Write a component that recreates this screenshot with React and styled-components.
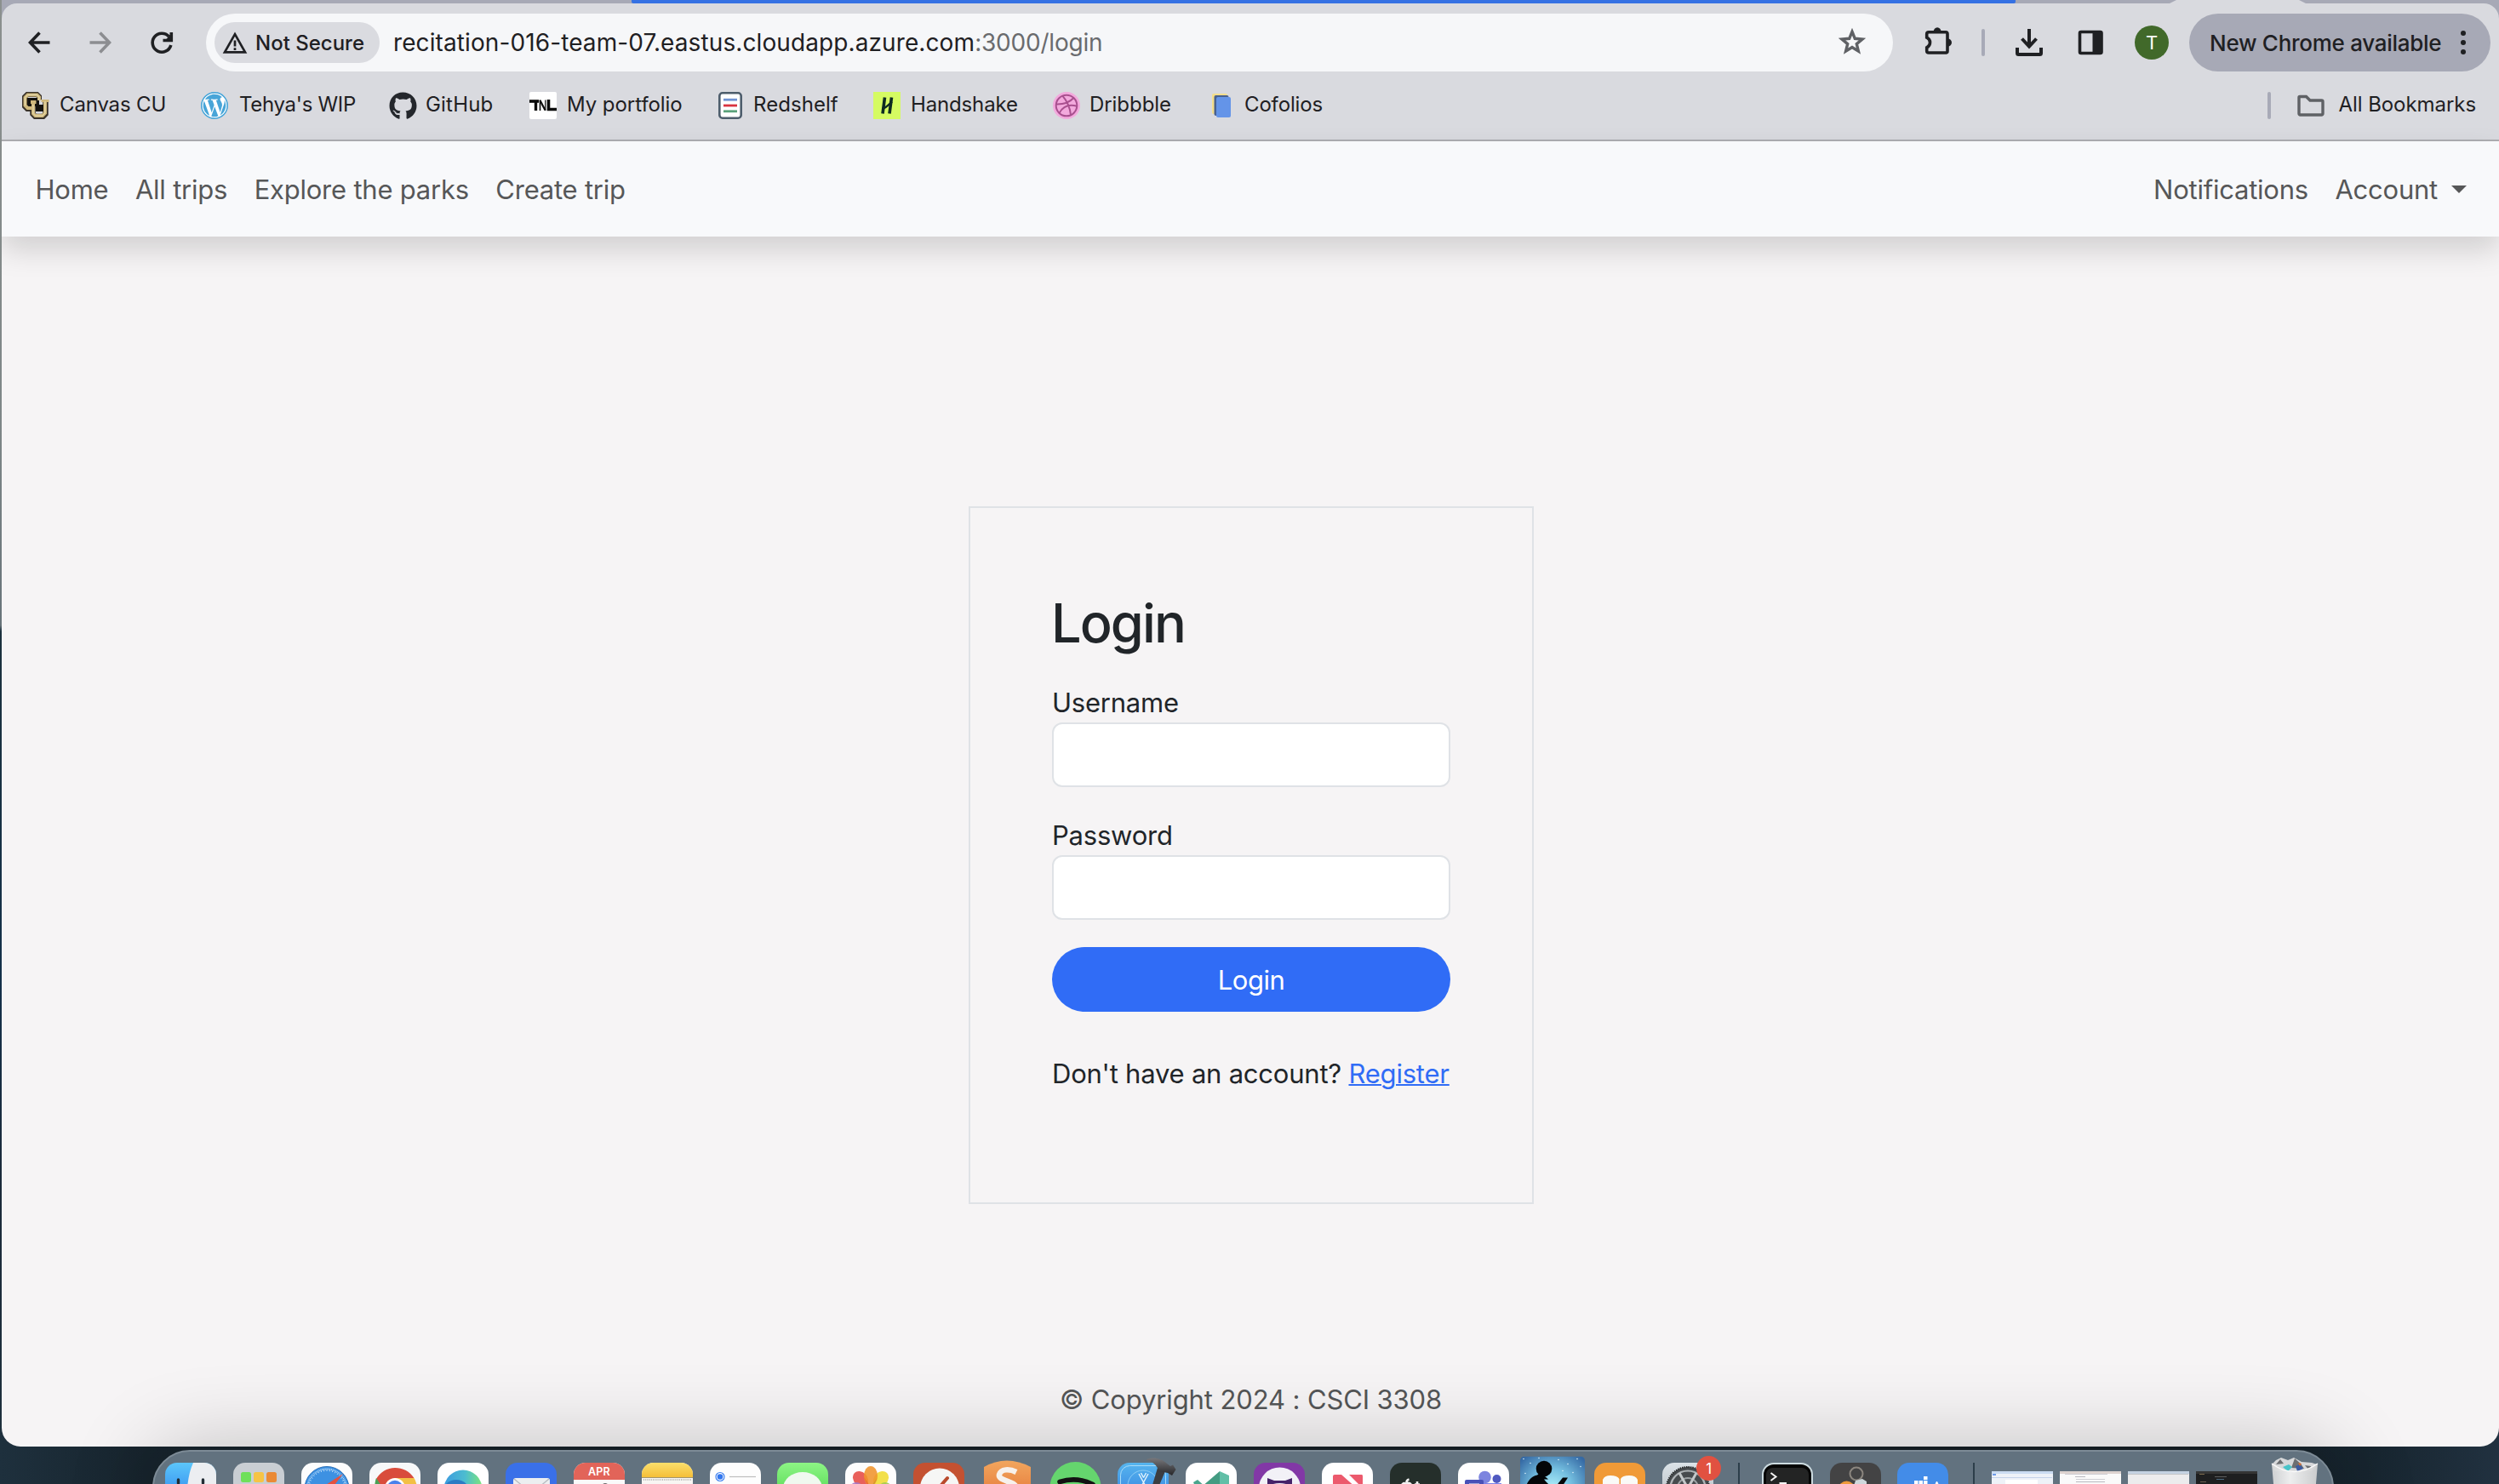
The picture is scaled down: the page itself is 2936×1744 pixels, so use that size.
import React from 'react';
import styled, { createGlobalStyle, css } from 'styled-components';
import { FaGithub, FaWordpress } from 'react-icons/fa';

const GlobalStyle = createGlobalStyle`
  * { box-sizing: border-box; }
  body { margin: 0; background: #1a2833; font-family: Inter, 'Liberation Sans', sans-serif; }
`;

const Desktop = styled.div`
  width: 2936px;
  height: 1744px;
  overflow: hidden;
  display: flex;
  flex-direction: column;
  gap: 4px;
  padding-left: 2px;
  background:
    linear-gradient(#8b908e 0, #7e8687 500px, #68747a 735px, #1b303d 742px, #14304a 1150px, #1b2a3a 1400px, transparent 1680px) 0 0 / 2px 100% no-repeat,
    linear-gradient(90deg, #1e303d 0, #17242d 170px, #151f26 900px, #151f26 2600px, #17252f 2780px, #213140 2936px);
`;

const BrowserWindow = styled.div`
  flex: none;
  height: 1700px;
  display: flex;
  flex-direction: column;
  overflow: hidden;
  border-radius: 0 0 22px 22px;
  background: #f6f4f5;
`;

/* ---------- browser chrome ---------- */

const TabStrip = styled.div`
  height: 4px;
  display: flex;
  background: #a7a9b6;
`;
const TabEdge = styled.div`
  width: ${(p) => p.$width}px;
  height: 4px;
  background: ${(p) => p.$color || 'transparent'};
  border-radius: 0 0 ${(p) => p.$round || 0}px ${(p) => p.$round || 0}px;
`;
const ActiveTabFoot = styled.div`
  width: 160px;
  height: 4px;
  background: #d9dadf;
  clip-path: polygon(8px 0, 152px 0, 160px 100%, 0 100%);
`;
const ChromeBackdrop = styled.div`
  background: #a7a9b6;
`;
const ChromeArea = styled.header`
  background: #d9dadf;
  border-bottom: 2px solid #aeaeb2;
  border-radius: 18px 18px 0 0;
  height: 162px;
`;
const Toolbar = styled.div`
  height: 92px;
  display: flex;
  align-items: center;
  padding-left: 25px;
`;
const Glyph = styled.svg`
  flex: none;
  width: ${(p) => p.$size || 40}px;
  height: ${(p) => p.$size || 40}px;
  margin-right: ${(p) => p.$after || 0}px;
  overflow: visible;
  fill: none;
  stroke: ${(p) => p.$color || '#1f2023'};
  stroke-width: ${(p) => p.$weight || 3.6};
`;
const Omnibox = styled.div`
  width: 1982px;
  height: 68px;
  margin-right: 34px;
  padding: 0 28px 0 10px;
  display: flex;
  align-items: center;
  border-radius: 34px;
  background: #f6f7f9;
`;
const SecurityChip = styled.div`
  width: 194px;
  height: 48px;
  padding-left: 8px;
  display: flex;
  align-items: center;
  gap: 8px;
  border-radius: 24px;
  background: #dadbe0;
  color: #1f2023;
  font-size: 24px;
  font-weight: 500;
  white-space: nowrap;
`;
const Address = styled.div`
  flex: 1;
  padding-left: 16px;
  color: #1f2023;
  font-size: 28px;
  letter-spacing: 0.1px;
  white-space: nowrap;
`;
const AddressPath = styled.span`
  color: #6a6b6e;
  letter-spacing: -0.2px;
`;
const Divider = styled.div`
  flex: none;
  width: 4px;
  height: 32px;
  margin-right: ${(p) => p.$after}px;
  border-radius: 2px;
  background: #a8aab7;
`;
const Avatar = styled.div`
  width: 40px;
  height: 40px;
  margin-right: 24px;
  display: grid;
  place-items: center;
  border-radius: 50%;
  background: #41692a;
  color: #fff;
  font-size: 22px;
`;
const UpdateChip = styled.div`
  width: 354px;
  height: 68px;
  padding: 0 29px 0 24px;
  display: flex;
  align-items: center;
  justify-content: space-between;
  border-radius: 34px;
  background: #a7a9b6;
  color: #1f2023;
  font-size: 26px;
  font-weight: 500;
  letter-spacing: -0.28px;
  white-space: nowrap;
`;
const Dots = styled.span`
  display: grid;
  gap: 5px;
  &::before, &::after { content: ''; }
  &::before, &::after, i { width: 6px; height: 6px; border-radius: 50%; background: #1f2023; }
`;
const BookmarkBar = styled.nav`
  height: 56px;
  display: flex;
  align-items: center;
  padding: 0 27px 0 24px;
`;
const Bookmark = styled.div`
  width: ${(p) => p.$width}px;
  display: flex;
  align-items: center;
  gap: ${(p) => p.$gap || 12}px;
  color: #1f2023;
  font-size: 24px;
  letter-spacing: ${(p) => p.$tracking ?? -0.06}px;
  white-space: nowrap;
  svg { flex: none; }
`;
const BookmarkLabel = styled.span`
  line-height: 30px;
  padding-bottom: 2px;
`;
const Spacer = styled.div`
  flex: 1;
`;

/* ---------- site ---------- */

const SiteNav = styled.nav`
  flex: none;
  position: relative;
  height: 112px;
  display: flex;
  align-items: center;
  justify-content: space-between;
  padding: 2px 38px 0 39.5px;
  background: #f8f9fb;
  box-shadow: 0 16px 32px rgba(0, 0, 0, 0.15);
`;
const NavGroup = styled.div`
  display: flex;
  align-items: center;
  gap: 31.5px;
`;
const NavLink = styled.a`
  display: flex;
  align-items: center;
  color: #565758;
  font-size: 31px;
  letter-spacing: -0.23px;
  line-height: 48px;
  white-space: nowrap;
  ${(p) => p.$caret && css`
    &::after {
      content: '';
      margin: -2px 0 0 16px;
      border: 9.5px solid transparent;
      border-top-color: #565758;
      border-bottom: 0;
    }
  `}
`;
const Main = styled.main`
  flex: 1;
  display: flex;
  flex-direction: column;
  align-items: center;
  padding: 317px 0 0 2px;
  color: #212529;
  font-size: 31px;
  letter-spacing: -0.22px;
  line-height: 48px;
`;
const Card = styled.form`
  width: 664px;
  height: 820px;
  padding: 97px 96px 0;
  display: flex;
  flex-direction: column;
  border: 2px solid #dfe2e6;
`;
const Title = styled.h2`
  margin: 0 0 31px -1px;
  font-size: 63px;
  font-weight: 500;
  letter-spacing: -1.9px;
  line-height: 77px;
`;
const Field = styled.label`
  display: flex;
  flex-direction: column;
  margin-bottom: 32px;
`;
const Input = styled.input`
  width: 100%;
  height: 76px;
  margin-top: -1px;
  margin-bottom: 1px;
  border: 2px solid #dfe2e6;
  border-radius: 12px;
  background: #fff;
  outline: none;
`;
const SubmitButton = styled.button`
  height: 76px;
  margin: -1px 0 49px;
  padding-top: 3px;
  border: 0;
  border-radius: 38px;
  background: #306cf6;
  color: #fff;
  font: inherit;
  letter-spacing: -0.5px;
`;
const Prompt = styled.p`
  margin: 0;
  white-space: nowrap;
`;
const RegisterLink = styled.a`
  color: #306cf6;
  text-decoration: underline;
  text-decoration-thickness: 2px;
`;
const Footer = styled.footer`
  margin-top: 206px;
  padding-right: 1px;
  color: #545657;
  letter-spacing: -0.12px;
`;

/* ---------- dock ---------- */

const Dock = styled.div`
  flex: none;
  position: relative;
  width: 2563px;
  height: 120px;
  margin-left: 176.5px;
  padding: 13px 0 0 13.5px;
  display: flex;
  align-items: flex-start;
  border: 2px solid #7d8b96;
  border-radius: 44px 44px 0 0;
  background: #62727f;
  box-shadow: 0 0 100px rgba(0, 0, 0, 0.24);
`;
const DockIcon = styled.svg`
  flex: none;
  width: 60px;
  height: 60px;
  margin-right: 19.95px;
  overflow: visible;
`;
const DockRule = styled.div`
  flex: none;
  width: 2px;
  height: 60px;
  margin-right: ${(p) => p.$after}px;
  margin-left: ${(p) => p.$before}px;
  background: #2c3e4a;
`;
const IconWithBadge = styled.div`
  position: relative;
  display: flex;
`;
const Badge = styled.span`
  position: absolute;
  left: 40.5px;
  top: -8px;
  width: 29px;
  height: 29px;
  display: grid;
  place-items: center;
  border-radius: 50%;
  background: #e15141;
  color: #fff;
  font-size: 17px;
`;
const Thumbnail = styled.div`
  flex: none;
  width: 71.5px;
  height: 50px;
  margin: 10px 8.5px 0 0;
  display: flex;
  flex-direction: column;
  gap: 2px;
  border-top: 3px solid ${(p) => p.$bar};
  background: ${(p) => p.$bg};
`;
const ThumbLine = styled.i`
  height: ${(p) => p.$h || 1}px;
  margin-left: ${(p) => p.$left || 0}px;
  width: ${(p) => p.$width}px;
  background: ${(p) => p.$color};
`;
const CalendarLabel = styled.text`
  fill: #fff;
  font: 600 12.5px Inter, sans-serif;
  letter-spacing: 0.2px;
`;

const Tile = ({ fill, children, stroke }) => (
  <DockIcon viewBox="0 0 60 60">
    <rect width="60" height="60" rx="14" fill={fill} stroke={stroke} />
    {children}
  </DockIcon>
);

const CuIcon = () => (
  <svg width="32" height="32" viewBox="0 0 32 32" fill="none">
    <path d="M20 9V5.500l-2.500-2.500H6L3 6v11l3 3h6" stroke="#3a332a" strokeWidth="6" />
    <path d="M12.500 14v12l3 3h9l3-3V9.500" stroke="#3a332a" strokeWidth="6.500" />
    <path d="M6 7h14v10H6z" fill="#15130f" />
    <path d="M16 15h10v8H16z" fill="#15130f" />
    <path d="M20 10V6l-2.500-2.500H6.500L3.500 6.500V16l3 3H12M16.500 12H10" stroke="#cfb87c" strokeWidth="4" />
    <path d="M13 14v11.500l2.500 2.500h8.500l3-3V11" stroke="#cfb87c" strokeWidth="4" />
    <path d="M22.500 10.500h9" stroke="#cfb87c" strokeWidth="3" />
    <path d="M20 10V6l-2.500-2.500H6.500L3.500 6.500V16M13 15v10.500l2.500 2.500h8.500l3-3V11" stroke="#eadfb4" strokeWidth="1" />
  </svg>
);
const WordPressIcon = () => (
  <svg width="32" height="32" viewBox="0 0 32 32">
    <circle cx="16" cy="16" r="15.500" fill="#fff" />
    <FaWordpress size={32} color="#48a5d8" />
    <circle cx="16" cy="16" r="15.300" fill="none" stroke="#48a5d8" strokeWidth="1.400" />
  </svg>
);
const PortfolioIcon = () => (
  <svg width="32" height="32" viewBox="0 0 32 32" fill="none" stroke="#0b0b0b">
    <rect width="32" height="32" rx="2" fill="#fff" stroke="none" />
    <path d="M0 11h11" strokeWidth="3.600" />
    <path d="M7.500 10v12" strokeWidth="3.400" />
    <path d="M12.500 22V9.500" strokeWidth="1.600" />
    <path d="M12.500 10l6 11.500" strokeWidth="2.200" />
    <path d="M18.800 22V9.500" strokeWidth="1.200" />
    <path d="M22.500 9v11.500H32" strokeWidth="3.600" />
  </svg>
);
const RedshelfIcon = () => (
  <svg width="28" height="32" viewBox="0 0 28 32">
    <rect x="1.300" y="1.300" width="25.400" height="29.400" rx="3.500" fill="#fff" stroke="#4d5d6c" strokeWidth="2.600" />
    <path d="M6 9.200h16" stroke="#6f93d2" strokeWidth="2.800" />
    <path d="M6 16h16" stroke="#d9333f" strokeWidth="2.800" />
    <path d="M6 22.800h16" stroke="#5aa27b" strokeWidth="2.800" />
  </svg>
);
const HandshakeIcon = () => (
  <svg width="32" height="32" viewBox="0 0 32 32">
    <rect width="32" height="32" fill="#d5fb62" />
    <path d="M13.500 6.500L11 25.500M21.500 6.500L19 25.500" stroke="#0d2b22" strokeWidth="3.600" fill="none" />
    <path d="M10.500 20c4.500-1.500 7-4.500 11.500-8.500" stroke="#0d2b22" strokeWidth="2.400" fill="none" />
  </svg>
);
const DribbbleIcon = () => (
  <svg width="32" height="32" viewBox="0 0 32 32" fill="none" stroke="#a9508f" strokeWidth="2">
    <circle cx="16" cy="16" r="16" fill="#f3a9dd" stroke="none" />
    <circle cx="16" cy="16" r="12.300" />
    <path d="M11.500 4.800C17 11 20 18 21 27M4 14.500c8 .2 15-1.500 20.500-7.500M7.500 25c4-7.500 11-11 20.800-8.200" />
  </svg>
);
const CofoliosIcon = () => (
  <svg width="32" height="32" viewBox="0 0 32 32">
    <rect x="4" y="2" width="18" height="24" rx="2" fill="#f4de8c" />
    <rect x="6.500" y="4" width="17" height="24" rx="2" fill="#49618f" />
    <rect x="9" y="6" width="17" height="24" rx="2" fill="#6494e8" />
  </svg>
);

const bookmarks = [
  { label: 'Canvas CU', width: 210, tracking: -0.15, icon: <CuIcon /> },
  { label: "Tehya's WIP", width: 221, tracking: -0.3, gap: 13, icon: <WordPressIcon /> },
  { label: 'GitHub', width: 165, tracking: 0.2, gap: 10, icon: <FaGithub size={33} color="#24272c" /> },
  { label: 'My portfolio', width: 222, icon: <PortfolioIcon /> },
  { label: 'Redshelf', width: 182, tracking: 0.05, gap: 13, icon: <RedshelfIcon /> },
  { label: 'Handshake', width: 211, tracking: -0.15, icon: <HandshakeIcon /> },
  { label: 'Dribbble', width: 183, gap: 11, icon: <DribbbleIcon /> },
  { label: 'Cofolios', width: 140, tracking: -0.15, gap: 10, icon: <CofoliosIcon /> },
];

const BrowserChrome = () => (
  <>
    <TabStrip>
      <TabEdge $width={740} />
      <TabEdge $width={1626} $color="#3571e3" $round={2} />
      <TabEdge $width={181} />
      <ActiveTabFoot />
    </TabStrip>
    <ChromeBackdrop>
      <ChromeArea>
        <Toolbar>
          <Glyph viewBox="0 0 40 40" $after={31}>
            <path d="M31.500 20H9M19.500 8.500L8.500 20L19.500 31.500" />
          </Glyph>
          <Glyph viewBox="0 0 40 40" $after={32} $color="#8c8d91">
            <path d="M7.500 20H30M19.500 8.500L30.500 20L19.500 31.500" />
          </Glyph>
          <Glyph viewBox="0 0 40 40" $after={32}>
            <path d="M30.800 23A11 11 0 1 1 28.500 13M31.300 8V17.500H21.500" />
            <path d="M31 10V17.500H24z" fill="#1f2023" stroke="none" />
          </Glyph>
          <Omnibox>
            <SecurityChip>
              <Glyph viewBox="0 0 32 32" $size={32} $weight={2.7}>
                <path d="M16 6.200L28 27.300H4z" />
                <path d="M16 13.500V20.500M16 22.300V25" />
              </Glyph>
              Not Secure
            </SecurityChip>
            <Address>
              recitation-016-team-07.eastus.cloudapp.azure.com<AddressPath>:3000/login</AddressPath>
            </Address>
            <Glyph viewBox="0 0 40 40" $color="#5f6165" $weight={3.4}>
              <path d="M20 7.200L23.300 15.300L32 16L25.300 21.700L27.400 30.200L20 25.600L12.600 30.200L14.700 21.700L8 16L16.700 15.300Z" />
            </Glyph>
          </Omnibox>
          <Glyph viewBox="0 0 40 40" $after={30}>
            <path d="M8 7.700H28a2 2 0 0 1 2 2V30a2 2 0 0 1-2 2H8a2.300 2.300 0 0 1-2.300-2.300V25.800C10.800 23.500 10.800 16.500 5.700 14.200V10A2.300 2.300 0 0 1 8 7.700z" />
            <path d="M13.600 7.500a4.500 5.300 0 0 1 9 0zM30.500 15.500a4.500 4.500 0 0 1 0 9z" fill="#1f2023" stroke="none" />
          </Glyph>
          <Divider $after={32} />
          <Glyph viewBox="0 0 40 40" $after={32} $weight={4}>
            <path d="M20 4V25M11.500 15.500L20 24.500L28.500 15.500M6 26V32.500a1.500 1.500 0 0 0 1.500 1.500H32.500a1.500 1.500 0 0 0 1.500-1.500V26" />
          </Glyph>
          <Glyph viewBox="0 0 40 40" $after={32}>
            <rect x="7.500" y="7.500" width="25.500" height="25" rx="1.500" />
            <path d="M22.500 7h11v26h-11z" fill="#1f2023" stroke="none" />
          </Glyph>
          <Avatar>T</Avatar>
          <UpdateChip>
            New Chrome available
            <Dots><i /></Dots>
          </UpdateChip>
        </Toolbar>
        <BookmarkBar>
          {bookmarks.map((b) => (
            <Bookmark key={b.label} $width={b.width} $gap={b.gap} $tracking={b.tracking}>
              {b.icon}
              <BookmarkLabel>{b.label}</BookmarkLabel>
            </Bookmark>
          ))}
          <Spacer />
          <Divider $after={28} />
          <Bookmark $gap={11}>
            <Glyph viewBox="0 0 40 40" $color="#5f6165" $weight={3.4}>
              <path d="M6 9.500h7.500l4.500 4.500h13.500a1.500 1.500 0 0 1 1.500 1.500v14a1.500 1.500 0 0 1-1.500 1.500h-25a1.500 1.500 0 0 1-1.500-1.500v-19a1 1 0 0 1 1-1z" />
            </Glyph>
            <BookmarkLabel>All Bookmarks</BookmarkLabel>
          </Bookmark>
        </BookmarkBar>
      </ChromeArea>
    </ChromeBackdrop>
  </>
);

const LoginPage = () => (
  <>
    <SiteNav>
      <NavGroup>
        <NavLink>Home</NavLink>
        <NavLink>All trips</NavLink>
        <NavLink>Explore the parks</NavLink>
        <NavLink>Create trip</NavLink>
      </NavGroup>
      <NavGroup>
        <NavLink>Notifications</NavLink>
        <NavLink $caret>Account</NavLink>
      </NavGroup>
    </SiteNav>
    <Main>
      <Card>
        <Title>Login</Title>
        <Field>Username<Input /></Field>
        <Field>Password<Input type="password" /></Field>
        <SubmitButton type="button">Login</SubmitButton>
        <Prompt>Don't have an account? <RegisterLink>Register</RegisterLink></Prompt>
      </Card>
      <Footer>© Copyright 2024 : CSCI 3308</Footer>
    </Main>
  </>
);

const Gradients = () => (
  <defs>
    <linearGradient id="finder" x2="0" y2="1"><stop stopColor="#5cc6fa" /><stop offset="1" stopColor="#1f70ea" /></linearGradient>
    <linearGradient id="orange" x2="0" y2="1"><stop stopColor="#f2a65e" /><stop offset="1" stopColor="#e0672a" /></linearGradient>
    <linearGradient id="edge" x2="1" y2="0"><stop stopColor="#3c9be0" /><stop offset=".55" stopColor="#4cbcd0" /><stop offset="1" stopColor="#7ce57c" /></linearGradient>
    <linearGradient id="yellow" x2="0" y2="1"><stop stopColor="#fbdf6c" /><stop offset="1" stopColor="#f5bf38" /></linearGradient>
    <linearGradient id="green" x2="0" y2="1"><stop stopColor="#8df585" /><stop offset="1" stopColor="#3ccb3c" /></linearGradient>
    <linearGradient id="xcode" x2="0" y2="1"><stop stopColor="#56b5ee" /><stop offset="1" stopColor="#2a6fdc" /></linearGradient>
    <radialGradient id="kindle" cy=".5" r=".65"><stop stopColor="#a9ecf8" /><stop offset=".45" stopColor="#74bfe0" /><stop offset="1" stopColor="#3569a4" /></radialGradient>
    <linearGradient id="silver" x2="0" y2="1"><stop stopColor="#dce3e8" /><stop offset="1" stopColor="#a9b0b6" /></linearGradient>
    <linearGradient id="hammer" x2="0" y2="1"><stop stopColor="#77777b" /><stop offset="1" stopColor="#262629" /></linearGradient>
    <linearGradient id="bin" x2="1" y2="0"><stop stopColor="#d3d4d5" /><stop offset=".4" stopColor="#f3f3f3" /><stop offset="1" stopColor="#cfd0d1" /></linearGradient>
  </defs>
);

const safariTicks = Array.from({ length: 41 }, (_, i) => Math.PI + (i * Math.PI) / 40);
const stars = [[4, 3], [12, 8], [22, 2], [45, 4], [56, 9], [67, 3], [71, 12], [6, 20], [36, 12], [62, 19], [50, 17]];

const DockBar = () => (
  <Dock>
    <Tile fill="url(#finder)">
      <Gradients />
      <path d="M33 0C29 9 27 18 26 30H60V14A14 14 0 0 0 46 0z" fill="#eceef1" />
      <path d="M15.500 20v4M44.500 20v4" stroke="#222c34" strokeWidth="3.400" strokeLinecap="round" />
    </Tile>
    <Tile fill="#c9ced3">
      <rect x="9" y="11" width="12" height="12" rx="2.500" fill="#6fe05a" />
      <rect x="24" y="11" width="12" height="12" rx="2.500" fill="#f6c445" />
      <rect x="39" y="11" width="12" height="12" rx="2.500" fill="#ea8a35" />
    </Tile>
    <Tile fill="#fdfdfd">
      <circle cx="30" cy="30.500" r="26" fill="#3d91e2" stroke="#2e71b8" />
      {safariTicks.map((a, i) => (
        <path key={i} stroke="#d6ebfb" strokeWidth=".8" d={`M${30 + 24 * Math.cos(a)} ${30.500 + 24 * Math.sin(a)}L${30 + (i % 2 ? 22 : 20.500) * Math.cos(a)} ${30.500 + (i % 2 ? 22 : 20.500) * Math.sin(a)}`} />
      ))}
      <path d="M49 13L26.500 27.500L33 34z" fill="#e4513f" />
    </Tile>
    <Tile fill="#f7f8f9">
      <path d="M8 19A26 26 0 0 1 52.500 18H30L20 36z" fill="#d94c3c" />
      <path d="M8 18L20 36V50A26 26 0 0 1 8 18z" fill="#4ba055" />
      <path d="M30 18H52.500A26 26 0 0 1 56 30H40z" fill="#f3c044" />
      <circle cx="30" cy="30" r="12" fill="#fff" />
      <circle cx="30" cy="30" r="9.300" fill="#4a82ec" />
    </Tile>
    <Tile fill="#fff">
      <circle cx="30" cy="31" r="22.500" fill="url(#edge)" />
      <circle cx="22" cy="37" r="17" fill="#2c7cc4" />
    </Tile>
    <Tile fill="#3a70e8">
      <rect x="9" y="18" width="43" height="32" rx="3" fill="#eceef0" />
      <path d="M10 19L30.500 36L51 19" fill="none" stroke="#b7bcc1" strokeWidth="1.300" />
    </Tile>
    <Tile fill="#fafafa">
      <path d="M0 20V14A14 14 0 0 1 14 0H46A14 14 0 0 1 60 14V20z" fill="#e26459" />
      <CalendarLabel x="30" y="15.300" textAnchor="middle">APR</CalendarLabel>
      <path d="M34 26.500a3.500 3.500 0 0 1 6 0" stroke="#666" fill="none" strokeWidth="1.600" />
    </Tile>
    <Tile fill="#f8f6f3">
      <path d="M0 17V14A14 14 0 0 1 14 0H46A14 14 0 0 1 60 14V17z" fill="url(#yellow)" />
      <path d="M0 17.500H60" stroke="#a19570" strokeWidth="1" />
      <path d="M2 20H58" stroke="#b9b9b7" strokeWidth="2" strokeDasharray="1 1.200" />
    </Tile>
    <Tile fill="#fdfdfd">
      <circle cx="12" cy="16.500" r="5" fill="#fff" stroke="#3f82f0" strokeWidth="1.200" />
      <circle cx="12" cy="16.500" r="3.300" fill="#3277ee" />
      <path d="M23 16.500H54" stroke="#bdbdbd" strokeWidth="1.200" />
    </Tile>
    <Tile fill="url(#green)">
      <ellipse cx="30" cy="30" rx="23" ry="19" fill="#f0f9ef" />
    </Tile>
    <Tile fill="#fdfdfd">
      <ellipse cx="18" cy="19" rx="8" ry="10" fill="#e9605b" transform="rotate(-45 18 19)" />
      <ellipse cx="42" cy="19" rx="8" ry="10" fill="#f2e04a" transform="rotate(45 42 19)" />
      <ellipse cx="13" cy="31" rx="8" ry="8" fill="#a879c4" opacity=".9" />
      <ellipse cx="47" cy="31" rx="8" ry="8" fill="#a2ca50" opacity=".9" />
      <ellipse cx="30" cy="15.500" rx="8" ry="11.500" fill="#f0942c" opacity=".88" />
      <path d="M22 17l8 12V33z" fill="#ea4f2d" opacity=".8" />
      <path d="M38 17l-8 12V33z" fill="#b9952a" opacity=".7" />
    </Tile>
    <Tile fill="#c45131">
      <circle cx="31" cy="29.500" r="23" fill="#f6f6f5" />
      <path d="M40 18L27 33" stroke="#b94a2c" strokeWidth="4" strokeLinecap="round" />
    </Tile>
    <DockIcon viewBox="0 0 60 60">
      <path d="M3 60V5Q16-2.500 30-2.500T58 5V60z" fill="url(#orange)" />
      <path d="M41 11C33 7 23 7 21 14c-2 8 20 7 20 16" stroke="#f7f1ec" strokeWidth="6.500" fill="none" />
    </DockIcon>
    <DockIcon viewBox="0 0 60 60">
      <circle cx="30.500" cy="29" r="30" fill="#65d56e" />
      <path d="M12 22.500Q32 16 51 25.500" stroke="#121212" strokeWidth="5.600" fill="none" strokeLinecap="round" />
    </DockIcon>
    <Tile fill="url(#xcode)">
      <rect x="3.500" y="3.500" width="53" height="53" rx="11" fill="none" stroke="#a9dcf8" strokeWidth="1" />
      <circle cx="30" cy="27" r="18" fill="none" stroke="#8ccdf5" strokeWidth="1" />
      <path d="M25 13L37 35M36 13L24 35M27.500 12l3 5.500M33.500 12l-3 5.500" fill="none" stroke="#e4f4fd" strokeWidth="1.400" />
      <path d="M47 6L56 10L45 36H38z" fill="#3c3d41" />
      <path d="M34-4C42-7 52-5 58 1L62 4L65 2.500L68.500 8L64 15L59 12L49 10C46 3 41-2 34-3z" fill="url(#hammer)" />
    </Tile>
    <Tile fill="#fff">
      <path d="M9 23L14 20L25 30H12z" fill="#49a58d" />
      <path d="M19 28L40 10V30H24z" fill="#439c82" />
      <path d="M40 10L51 15V30H40z" fill="#61bfa7" />
    </Tile>
    <Tile fill="#8238a6">
      <circle cx="30.500" cy="30" r="24.500" fill="#f2f1f7" />
      <path d="M16 30V18L24 21H37L45 18V30z" fill="#46236a" />
      <path d="M20 30V26Q30 22 41 26V30z" fill="#efeef5" />
    </Tile>
    <Tile fill="#fff">
      <path d="M13 16Q13 14 15 14H23L41 30H13z" fill="#ec5a6d" />
      <path d="M32 14H47Q48 14 48 16V30z" fill="#ec5a6d" />
    </Tile>
    <Tile fill="#252f2b">
      <path d="M14 30c-1-5 2-7 5-5c3-2 5-1 6 1M19.500 23c0-2 1-3 3-3.500M32 22V30M29 25.500h6" stroke="#f3f3f3" strokeWidth="2.600" fill="none" />
      <path d="M39 26l4 6M49 26l-4 6" stroke="#f3f3f3" strokeWidth="2.500" />
    </Tile>
    <Tile fill="#fff">
      <circle cx="31.500" cy="17" r="7.300" fill="#7c84df" />
      <circle cx="45.500" cy="19" r="5" fill="#5059c0" />
      <rect x="25" y="24" width="26" height="20" fill="#7b83eb" />
      <rect x="8" y="20" width="22" height="24" rx="2" fill="#4951b8" />
      <path d="M13 25.500H25" stroke="#fff" strokeWidth="2" />
    </Tile>
    <DockIcon viewBox="0 0 60 60">
      <svg x="-7" y="-7.500" width="76" height="70" viewBox="0 0 76 70">
        <rect width="76" height="70" rx="5" fill="url(#kindle)" />
        {stars.map(([x, y]) => <circle key={`${x}-${y}`} cx={x} cy={y} r=".8" fill="#d8f0fa" />)}
        <circle cx="28" cy="14.500" r="9.300" fill="#040608" />
        <path d="M24 19L33 27L28 27C31 31 35 33 36 38H6C8 30 13 23 20 22z" fill="#040608" />
        <path d="M43 34L50 25H56L49 36z" fill="#040608" />
      </svg>
    </DockIcon>
    <Tile fill="#f09a37">
      <path d="M10 30V20Q12 15 19 15Q27 15 29.500 19V30zM31 30V19Q33 15 41 15Q49 15 51 20V30z" fill="#fafaf7" />
    </Tile>
    <IconWithBadge>
      <Tile fill="url(#silver)">
        <circle cx="30" cy="30" r="25" fill="#474b4e" stroke="#26292b" strokeWidth="2" strokeDasharray="1.500 1" />
        <circle cx="30" cy="30" r="20.500" fill="none" stroke="#aeb3b6" strokeWidth="2.200" />
        <circle cx="30" cy="30" r="12" fill="none" stroke="#9da2a5" strokeWidth="2" />
        <path d="M20 12L30 30L40 12" fill="none" stroke="#c3c7c9" strokeWidth="3" />
      </Tile>
      <Badge>1</Badge>
    </IconWithBadge>
    <DockRule $before={9} $after={26} />
    <Tile fill="#ccdbe0">
      <rect x="2" y="2" width="56" height="56" rx="12" fill="#050505" />
      <rect x="5" y="6" width="50" height="48" rx="8" fill="#232424" />
      <path d="M10.500 12L16.500 16.500L10.500 21M20.500 24H29" fill="none" stroke="#f5f5f5" strokeWidth="2" />
    </Tile>
    <Tile fill="#434344">
      <circle cx="31" cy="13" r="7.500" fill="none" stroke="#8b867f" strokeWidth="2" />
      <path d="M30 21L38 19L43 22V30H27z" fill="#cfd8dc" />
      <circle cx="19.500" cy="31" r="9.500" fill="#ef9b3b" />
    </Tile>
    <Tile fill="#438ce8">
      <path d="M20 23h4.500M25.500 23h4.500M31 23h4.500M31 18h4.500" stroke="#fff" strokeWidth="4.200" />
      <path d="M44 27L46.500 22L49 27z" fill="#fff" stroke="#fff" />
    </Tile>
    <DockRule $before={9} $after={20} />
    <Thumbnail $bar="#cbdcf2" $bg="#eef2f8">
      <ThumbLine $color="#6f9be8" $width={4} $left={1} $h={2} />
      <ThumbLine $color="#c5d3ea" $width={71} />
      <ThumbLine $color="#ffffff" $width={38} $left={16} $h={12} />
    </Thumbnail>
    <Thumbnail $bar="#ddd3d0" $bg="#fafafa">
      <ThumbLine $color="#cfcfd4" $width={50} $left={6} />
      <ThumbLine $color="#b9b9c0" $width={12} $left={18} />
      <ThumbLine $color="#cfcfd4" $width={34} $left={19} />
      <ThumbLine $color="#b9b9c0" $width={34} $left={19} />
    </Thumbnail>
    <Thumbnail $bar="#c4d2e2" $bg="#ececed">
      <ThumbLine $color="#c3c5c8" $width={71} />
    </Thumbnail>
    <Thumbnail $bar="#353535" $bg="#1e1f20">
      <ThumbLine $color="#7b6a4c" $width={6} $left={4} />
      <ThumbLine $color="#5d5d5d" $width={14} $left={22} />
      <ThumbLine $color="#4b6a80" $width={9} $left={24} />
      <ThumbLine $color="#6b5f52" $width={7} $left={5} />
    </Thumbnail>
    <DockIcon viewBox="0 0 60 60">
      <path d="M9 2L14-3L20-6L28-3L35-6L44-1L56 0L62 2L56 10H12z" fill="#d7d8da" />
      <path d="M14 2l5-6 4 5zM32 6l4-11 7 6 4 6zM48 3l7 1-2 5z" fill="#6d6f72" />
      <path d="M22 5l7-3 4 3-5 5z" fill="#48c4c9" />
      <path d="M37 4l5-2 4 5-7 3z" fill="#3c5ba0" />
      <path d="M40 0l4 1-2 3z" fill="#e0702f" />
      <path d="M9 1Q35 20 63 1L58 60H14z" fill="url(#bin)" opacity=".96" />
      <path d="M9 1Q35 20 63 1" fill="none" stroke="#fbfbfb" strokeWidth="1.500" />
    </DockIcon>
  </Dock>
);

export default function App() {
  return (
    <>
      <GlobalStyle />
      <Desktop>
        <BrowserWindow>
          <BrowserChrome />
          <LoginPage />
        </BrowserWindow>
        <DockBar />
      </Desktop>
    </>
  );
}
